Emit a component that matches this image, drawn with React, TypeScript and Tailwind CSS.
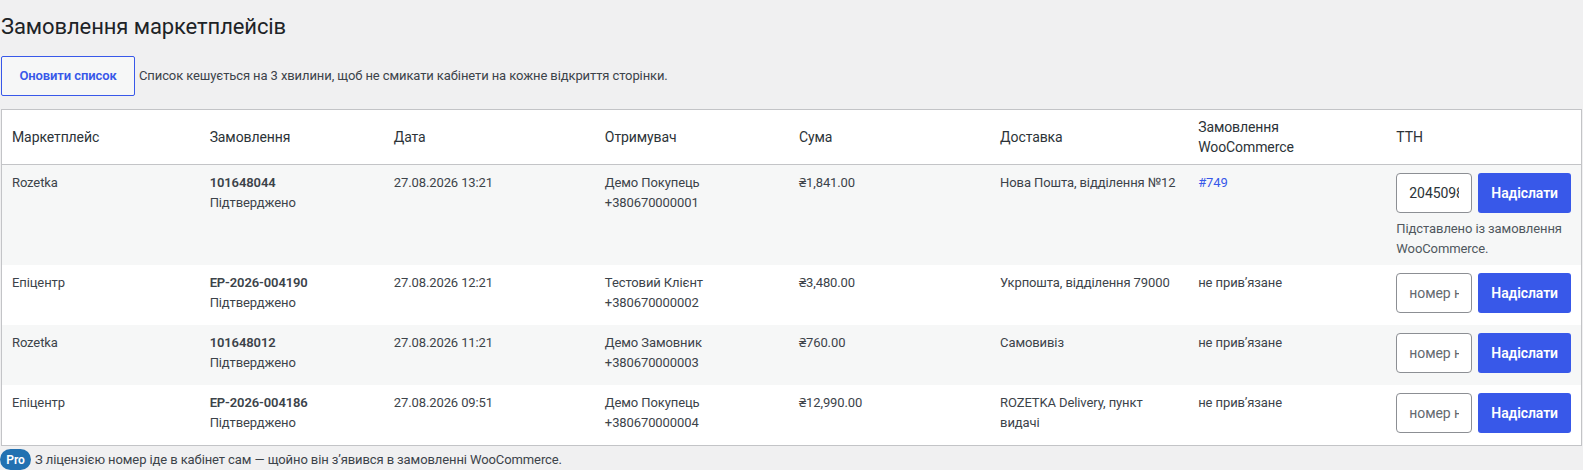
import React from "react";

// ---------------------------------------------------------------------------
// Data
// ---------------------------------------------------------------------------
interface MarketplaceOrder {
  marketplace: string;
  number: string;
  status: string;
  date: string;
  name: string;
  phone: string;
  total: string;
  delivery: string;
  wooOrder?: string;
  ttn?: string;
  note?: string;
}

const orders: MarketplaceOrder[] = [
  {
    marketplace: "Rozetka",
    number: "101648044",
    status: "Підтверджено",
    date: "27.08.2026 13:21",
    name: "Демо Покупець",
    phone: "+380670000001",
    total: "₴1,841.00",
    delivery: "Нова Пошта, відділення №12",
    wooOrder: "#749",
    ttn: "20450987654321",
    note: "Підставлено із замовлення WooCommerce.",
  },
  {
    marketplace: "Епіцентр",
    number: "EP-2026-004190",
    status: "Підтверджено",
    date: "27.08.2026 12:21",
    name: "Тестовий Клієнт",
    phone: "+380670000002",
    total: "₴3,480.00",
    delivery: "Укрпошта, відділення 79000",
  },
  {
    marketplace: "Rozetka",
    number: "101648012",
    status: "Підтверджено",
    date: "27.08.2026 11:21",
    name: "Демо Замовник",
    phone: "+380670000003",
    total: "₴760.00",
    delivery: "Самовивіз",
  },
  {
    marketplace: "Епіцентр",
    number: "EP-2026-004186",
    status: "Підтверджено",
    date: "27.08.2026 09:51",
    name: "Демо Покупець",
    phone: "+380670000004",
    total: "₴12,990.00",
    delivery: "ROZETKA Delivery, пункт видачі",
  },
];

const headers = [
  "Маркетплейс",
  "Замовлення",
  "Дата",
  "Отримувач",
  "Сума",
  "Доставка",
  "Замовлення WooCommerce",
  "ТТН",
];

// ---------------------------------------------------------------------------
// Component
// ---------------------------------------------------------------------------
function TtnCell({ order }: { order: MarketplaceOrder }) {
  return (
    <td className="px-[10px] pt-2 pb-[6px] align-top">
      <div className="mb-[6px] flex h-10 items-center gap-[6px]">
        <input
          type="text"
          defaultValue={order.ttn}
          placeholder="номер накладної"
          className="h-10 w-[76px] rounded-[4px] border border-[#8c8f94] bg-white px-3 text-[14px] text-[#2c3338] outline-none placeholder:text-[#646970]"
        />
        <button
          type="button"
          className="h-10 w-[95px] rounded-[3px] bg-[#3858e9] text-[14px] font-semibold text-white"
        >
          Надіслати
        </button>
      </div>
      {order.note && (
        <p className="text-[13px] leading-5 text-[#50575e]">{order.note}</p>
      )}
    </td>
  );
}

export default function App() {
  return (
    <div
      className="min-h-[470px] bg-[#f0f0f1] pl-px text-[13px] leading-5 tracking-[-0.1px] text-[#3c434a]"
      style={{ fontFamily: 'Roboto, "Noto Sans", sans-serif' }}
    >
      <h1 className="pt-[12px] pb-[3px] text-[22px] font-normal leading-[30px] text-[#1d2327]">
        Замовлення маркетплейсів
      </h1>

      <div className="mt-[11px] flex items-center gap-1">
        <button
          type="button"
          className="h-10 w-[134px] rounded-[2px] border border-[#3858e9] bg-[#f6f7f7] text-[13px] font-semibold text-[#3858e9]"
        >
          Оновити список
        </button>
        <span>Список кешується на 3 хвилини, щоб не смикати кабінети на кожне відкриття сторінки.</span>
      </div>

      <table className="mt-[13px] w-[1581px] table-fixed border-collapse border border-[#c3c4c7] bg-white">
        <colgroup>
          <col className="w-[198px]" />
          <col className="w-[184px]" />
          <col className="w-[211px]" />
          <col className="w-[194px]" />
          <col className="w-[201px]" />
          <col className="w-[198px]" />
          <col className="w-[198px]" />
          <col className="w-[195px]" />
        </colgroup>
        <thead>
          <tr className="border-b border-[#c3c4c7]">
            {headers.map((h) => (
              <th
                key={h}
                className="h-[54px] px-[10px] py-[7px] text-left align-middle text-[14px] font-normal leading-5 text-[#2c3338]"
              >
                {h}
              </th>
            ))}
          </tr>
        </thead>
        <tbody>
          {orders.map((o, idx) => (
            <tr key={o.number} className={idx % 2 === 0 ? "bg-[#f6f7f7]" : "bg-white"}>
              <td className="px-[10px] py-2 align-top">{o.marketplace}</td>
              <td className="px-[10px] py-2 align-top">
                <div className="font-semibold">{o.number}</div>
                <div>{o.status}</div>
              </td>
              <td className="px-[10px] py-2 align-top">{o.date}</td>
              <td className="px-[10px] py-2 align-top">
                <div>{o.name}</div>
                <div>{o.phone}</div>
              </td>
              <td className="px-[10px] py-2 align-top">{o.total}</td>
              <td className="px-[10px] py-2 align-top">{o.delivery}</td>
              <td className="px-[10px] py-2 align-top">
                {o.wooOrder ? (
                  <a href="#" className="text-[#3858e9]">
                    {o.wooOrder}
                  </a>
                ) : (
                  "не прив’язане"
                )}
              </td>
              <TtnCell order={o} />
            </tr>
          ))}
        </tbody>
      </table>

      <div className="mt-[3px] flex items-center gap-1">
        <span className="ml-[-1px] flex h-[21px] w-[31px] items-center justify-center rounded-full bg-[#2271b1] text-[12px] font-semibold text-white">
          Pro
        </span>
        <span>З ліцензією номер іде в кабінет сам — щойно він з’явився в замовленні WooCommerce.</span>
      </div>
    </div>
  );
}
